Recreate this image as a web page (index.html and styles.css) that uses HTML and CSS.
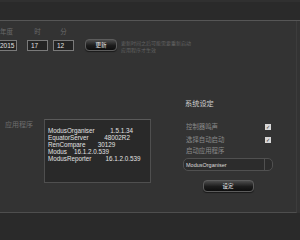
FILE: index.html
```html
<!DOCTYPE html>
<html lang="zh">
<head>
<meta charset="utf-8">
<link rel="stylesheet" href="styles.css">
</head>
<body>
<div class="app">
  <header class="topbar"></header>
  <main class="content">
    <section class="clock">
      <div class="field year"><span class="flabel">年度</span><div class="inp">2015</div></div>
      <div class="field"><span class="flabel">时</span><div class="inp">17</div></div>
      <div class="field"><span class="flabel">分</span><div class="inp">12</div></div>
      <button class="btn update">更新</button>
      <p class="note">更新时间之后可能需要重新启动<br>应用程序才生效</p>
    </section>
    <section class="lower">
      <div class="apps">
        <span class="side-label">应用程序</span>
        <div class="listbox">
<div class="item">ModusOrganiser         1.5.1.34</div>
<div class="item">EquatorServer         48002R2</div>
<div class="item">RenCompare       30129</div>
<div class="item">Modus    16.1.2.0.539</div>
<div class="item">ModusReporter        16.1.2.0.539</div>
        </div>
      </div>
      <div class="settings">
        <h3 class="title">系统设定</h3>
        <div class="row r1"><span>控制器鸣声</span><span class="chk">✓</span></div>
        <div class="row r2"><span>选择自动启动</span><span class="chk">✓</span></div>
        <div class="row r3"><span>启动应用程序</span></div>
        <div class="combo"><span class="combo-text">ModusOrganiser</span><span class="combo-arrow"></span></div>
        <button class="btn set">设定</button>
      </div>
    </section>
  </main>
  <footer class="bottombar"></footer>
</div>
</body>
</html>
```
FILE: styles.css
```css
html, body {
  margin: 0;
  padding: 0;
  background: #333333;
  overflow: hidden;
}
body {
  width: 300px;
  height: 240px;
  font-family: "Liberation Sans", "Noto Sans CJK SC", sans-serif;
  color: #dddddd;
}
.app {
  width: 300px;
  height: 240px;
  display: flex;
  flex-direction: column;
}
.topbar {
  height: 18px;
  background: #2a2a2a;
  border-top: 2px solid #303030;
  border-bottom: 1px solid #565656;
  flex: none;
}
.content {
  height: 191px;
  flex: none;
  background: #333333;
  border-bottom: 1px solid #4e4e4e;
  border-right: 1px solid #3c3c3c;
  width: 296px;
}
.bottombar {
  flex: 1;
  background: #2a2a2a;
}

/* clock */
.clock {
  display: flex;
  align-items: flex-end;
  margin-left: -4px;
  margin-top: 6px;
  height: 24px;
}
.field {
  display: flex;
  flex-direction: column;
  align-items: center;
  margin-right: 5px;
}
.field.year { margin-right: 10px; }
.flabel {
  font-family: "Noto Sans CJK SC", sans-serif;
  font-size: 6.5px;
  line-height: 8px;
  color: #6a6a6a;
  margin-bottom: 5px;
}
.inp {
  width: 21px;
  height: 11px;
  box-sizing: border-box;
  border: 1px solid #7a7a7a;
  background: #232323;
  font-size: 6.5px;
  line-height: 9px;
  padding-left: 3px;
  color: #e0e0e0;
}
.btn {
  font-family: "Noto Sans CJK SC", sans-serif;
  color: #f0f0f0;
  border: 1px solid #5c5c5c;
  border-radius: 4px;
  background: linear-gradient(#4c4c4c, #1c1c1c 55%, #0e0e0e);
  padding: 0;
  font-size: 5.5px;
  line-height: 9px;
  box-shadow: 0 1px 1px rgba(0,0,0,0.5);
}
.btn.update {
  width: 32px;
  height: 12px;
  margin-left: 6px;
}
.note {
  margin: 0 0 -2px 4px;
  font-family: "Noto Sans CJK SC", sans-serif;
  font-size: 5px;
  line-height: 6.5px;
  color: #626262;
  align-self: flex-end;
}

/* lower */
.lower {
  display: flex;
  align-items: flex-start;
  margin-top: 47px;
}
.apps {
  display: flex;
  align-items: flex-start;
  margin-top: 21px;
  padding-left: 5px;
}
.side-label {
  font-family: "Noto Sans CJK SC", sans-serif;
  font-size: 7px;
  line-height: 9px;
  color: #6e6e6e;
  margin-top: 1px;
  width: 39px;
}
.listbox {
  width: 107px;
  height: 64px;
  box-sizing: border-box;
  border: 1px solid #4f4f4f;
  border-top-color: #5a5a5a;
  background: #292929;
  padding: 7px 0 0 3px;
}
.item {
  white-space: pre;
  font-size: 6.3px;
  line-height: 7px;
  color: #e2e2e2;
}

.settings {
  margin-left: 32px;
  width: 90px;
  display: flex;
  flex-direction: column;
  font-family: "Noto Sans CJK SC", sans-serif;
}
.title {
  margin: 0 0 14px 2px;
  font-size: 7.2px;
  line-height: 10px;
  font-weight: normal;
  color: #cfcfcf;
}
.row {
  display: flex;
  justify-content: space-between;
  align-items: center;
  height: 9px;
  font-size: 6.4px;
  color: #8a8a8a;
  padding-left: 3px;
  padding-right: 2px;
}
.r2 { margin-top: 4px; }
.r3 { margin-top: 2px; }
.chk {
  width: 6px;
  height: 6px;
  background: #d8d8d8;
  color: #222;
  font-size: 5px;
  line-height: 6px;
  text-align: center;
  font-family: "DejaVu Sans", sans-serif;
}
.combo {
  margin-top: 3px;
  height: 13px;
  box-sizing: border-box;
  border: 1px solid #505050;
  border-radius: 5px;
  background: #2c2c2c;
  display: flex;
  align-items: center;
}
.combo-text {
  flex: 1;
  font-family: "Liberation Sans", sans-serif;
  font-size: 5.5px;
  color: #dcdcdc;
  padding-left: 2px;
}
.combo-arrow {
  width: 7px;
  height: 11px;
  border-left: 1px solid #505050;
}
.btn.set {
  align-self: center;
  width: 51px;
  height: 12px;
  margin-top: 9px;
}
```
